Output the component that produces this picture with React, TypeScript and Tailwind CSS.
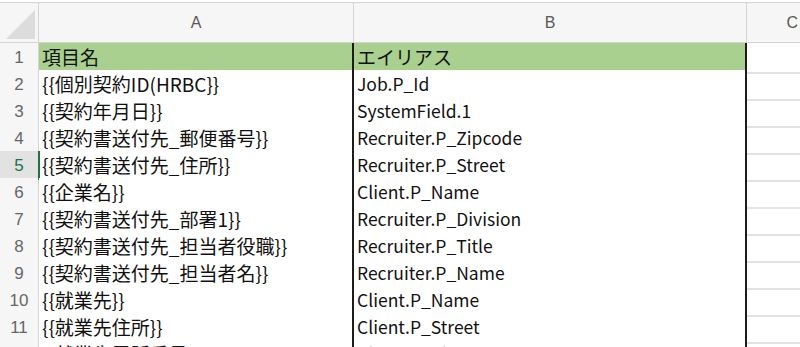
import React from 'react';

const rows: [string, string][] = [
  ['項目名', 'エイリアス'],
  ['{{個別契約ID(HRBC}}', 'Job.P_Id'],
  ['{{契約年月日}}', 'SystemField.1'],
  ['{{契約書送付先_郵便番号}}', 'Recruiter.P_Zipcode'],
  ['{{契約書送付先_住所}}', 'Recruiter.P_Street'],
  ['{{企業名}}', 'Client.P_Name'],
  ['{{契約書送付先_部署1}}', 'Recruiter.P_Division'],
  ['{{契約書送付先_担当者役職}}', 'Recruiter.P_Title'],
  ['{{契約書送付先_担当者名}}', 'Recruiter.P_Name'],
  ['{{就業先}}', 'Client.P_Name'],
  ['{{就業先住所}}', 'Client.P_Street'],
  ['{{就業先電話番号}}', 'Client.P_Phone'],
];

const cols = 'grid grid-cols-[39px_315px_393px_1fr]';
const cellFont = { fontFamily: '"Noto Sans CJK JP", "Noto Sans", sans-serif' };

export default function App() {
  return (
    <div className="w-[800px] h-[347px] overflow-hidden bg-white">
      {/* Column headers */}
      <div className={`${cols} mt-[2px] h-[41px] border-t border-b border-[#d4d4d4] bg-[#f6f6f6] text-[#595959] text-[16px] font-['Liberation_Sans',sans-serif]`}>
        <div className="relative border-r border-[#d4d4d4]">
          <svg className="absolute left-0 top-0" width="39" height="39" viewBox="0 0 39 39">
            <polygon points="6,36 35,7 35,36" fill="#dcdcdc" />
          </svg>
        </div>
        <div className="flex items-center justify-center border-r border-[#d4d4d4]">A</div>
        <div className="flex items-center justify-center border-r border-[#d4d4d4]">B</div>
        <div className="flex items-center justify-end pr-[2px]">C</div>
      </div>

      {/* Body rows */}
      {rows.map(([a, b], i) => {
        const n = i + 1;
        const selected = n === 5;
        const header = n === 1;
        return (
          <div key={n} className={`${cols} h-[27px]`}>
            <div
              className={`flex items-center justify-center border-r border-b border-[#d4d4d4] text-[17px] font-['Liberation_Sans',sans-serif] ${
                selected ? 'bg-[#e2e2e2] text-[#1e7145]' : 'bg-[#f6f6f6] text-[#666666]'
              }`}
            >
              {n}
            </div>
            <div
              className={`relative flex items-center pl-[3px] border-r-2 border-b-2 border-[#1c1c1c] text-[19px] text-[#111] whitespace-nowrap ${
                header ? 'bg-[#a9d08e]' : 'bg-white'
              }`}
              style={cellFont}
            >
              {selected && <span className="absolute -left-[1px] top-0 bottom-0 w-[2px] bg-[#1e7145]" />}
              {a}
            </div>
            <div
              className={`flex items-center pl-[3px] border-r-2 border-b-2 border-[#1c1c1c] text-[#111] whitespace-nowrap ${
                header ? 'bg-[#a9d08e] text-[19px]' : 'bg-white text-[17.5px]'
              }`}
              style={cellFont}
            >
              {b}
            </div>
            <div className="border-b-2 border-[#e2e2e2]" />
          </div>
        );
      })}
    </div>
  );
}
